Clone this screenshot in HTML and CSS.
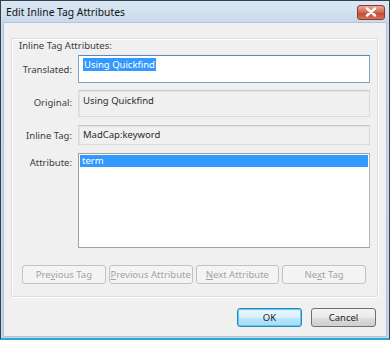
FILE: index.html
```html
<!DOCTYPE html>
<html>
<head>
  <meta charset="UTF-8">
  <title>Edit Inline Tag Attributes</title>
  <link rel="stylesheet" href="styles.css">
</head>
<body>
  <div class="window">
    <div class="titlebar">
      <span class="title">Edit Inline Tag Attributes</span>
      <span class="close">
        <svg width="12" height="10" viewBox="0 0 12 10">
          <path d="M2 1.5 L10 8.5 M10 1.5 L2 8.5" stroke="#fff" stroke-width="2.4" stroke-linecap="round"/>
        </svg>
      </span>
    </div>
    <div class="client">
      <div class="group">
        <div class="group-label">Inline Tag Attributes:</div>
        <div class="row row-translated">
          <label class="row-label">Translated:</label>
          <div class="field field-edit"><span class="selected-text">Using Quickfind</span></div>
        </div>
        <div class="row row-original">
          <label class="row-label">Original:</label>
          <div class="field field-readonly tall">Using Quickfind</div>
        </div>
        <div class="row row-tag">
          <label class="row-label">Inline Tag:</label>
          <div class="field field-readonly">MadCap:keyword</div>
        </div>
        <div class="row row-attr">
          <label class="row-label">Attribute:</label>
          <div class="field listbox">
            <div class="list-item selected">term</div>
          </div>
        </div>
        <div class="nav-buttons">
          <button class="btn" disabled>Pre<u>v</u>ious Tag</button>
          <button class="btn" disabled><u>P</u>revious Attribute</button>
          <button class="btn" disabled><u>N</u>ext Attribute</button>
          <button class="btn" disabled>Ne<u>x</u>t Tag</button>
        </div>
      </div>
      <div class="dialog-buttons">
        <button class="btn btn-default">OK</button>
        <button class="btn btn-cancel">Cancel</button>
      </div>
    </div>
  </div>
</body>
</html>
```

FILE: styles.css
```css
:root {
  --face: #f0f0f0;
  --text: #1e1e1e;
  --label: #3b3b3b;
  --disabled: #a3a3a3;
  --highlight: #3399ff;
  --font: "Noto Sans", "Open Sans", sans-serif;
}

body {
  margin: 0;
  font-family: var(--font);
  font-size: 9.5px;
  color: var(--text);
  background: #fff;
}

.window {
  width: 390px;
  height: 340px;
  box-sizing: border-box;
  border: 1px solid #34404c;
  border-bottom: 2px solid #2aa9d3;
  background: linear-gradient(#dce8f5, #c8d9eb 22px, #c2d5e9);
  display: flex;
  flex-direction: column;
}

.titlebar {
  height: 21px;
  display: flex;
  align-items: center;
  justify-content: space-between;
  padding: 0 4px 0 5px;
}

.title {
  font-size: 10.3px;
  color: #111;
}

.close {
  width: 28px;
  height: 15px;
  margin-top: 1px;
  box-sizing: border-box;
  border: 1px solid #8a3a30;
  border-radius: 3px;
  background: linear-gradient(#e9a796, #d2654f 50%, #c2432c 51%, #d7735a);
  display: flex;
  align-items: center;
  justify-content: center;
}

.client {
  flex: 1;
  margin: 0 2px 1px 2px;
  background: var(--face);
  border: 1px solid #b4c4d6;
  padding: 15px 8px 0 7px;
  display: flex;
  flex-direction: column;
}

.group {
  height: 259px;
  box-sizing: border-box;
  border: 1px solid #dcdcdc;
  box-shadow: inset 1px 1px 0 #fff, 1px 1px 0 #fff;
  border-radius: 2px;
  padding: 1px 7px 0 7px;
  display: flex;
  flex-direction: column;
}

.group-label {
  color: var(--label);
  height: 12px;
  line-height: 12px;
}

.row {
  display: flex;
  align-items: center;
}

.row-label {
  width: 53px;
  flex: none;
  text-align: right;
  margin-right: 6px;
  color: var(--label);
}

.row-translated { margin-top: 3px; }
.row-original { margin-top: 7px; }
.row-original .row-label { margin-top: -3px; }
.row-tag { margin-top: 8px; }
.row-attr { margin-top: 8px; align-items: flex-start; }
.row-attr .row-label { margin-top: 3px; }

.field {
  flex: 1;
  box-sizing: border-box;
}

.field-edit {
  height: 28px;
  background: #fff;
  border: 1px solid #7aa4cf;
  border-top-color: #5d87b8;
  padding: 3px 4px;
  line-height: 11px;
}

.selected-text {
  background: var(--highlight);
  color: #fff;
  padding: 0 1px;
}

.field-readonly {
  height: 20px;
  border: 1px solid #dadada;
  border-top-color: #c8c8c8;
  box-shadow: inset 1px 1px 0 #e3e3e3;
  padding: 2px 4px;
  line-height: 14px;
  color: #2b2b2b;
}

.field-readonly.tall {
  height: 27px;
  padding-top: 3px;
}

.listbox {
  height: 95px;
  background: #fff;
  border: 1px solid #a0a0a0;
  border-right-color: #b8b8b8;
  padding: 1px;
}

.list-item {
  height: 12px;
  line-height: 12px;
  padding: 0 2px;
}

.list-item.selected {
  background: var(--highlight);
  color: #fff;
}

.nav-buttons {
  display: flex;
  gap: 3px;
  margin: 17px 4px 0 3px;
}

.nav-buttons .btn {
  flex: 1;
  min-width: 0;
}

.btn {
  height: 19px;
  box-sizing: border-box;
  font-family: var(--font);
  font-size: 9.5px;
  white-space: nowrap;
  color: var(--text);
  border: 1px solid #707070;
  border-radius: 3px;
  background: linear-gradient(#f2f2f2, #ebebeb 50%, #dddddd 51%, #cfcfcf);
  padding: 0;
}

.btn:disabled {
  color: var(--disabled);
  border-color: #c2c2c2;
  background: #f4f4f4;
}

.dialog-buttons {
  display: flex;
  justify-content: flex-end;
  gap: 9px;
  margin-top: 11px;
  padding-right: 2px;
}

.dialog-buttons .btn {
  width: 65px;
  height: 19px;
}

.btn-default {
  border-color: #3c7fb1;
  background: linear-gradient(#eaf6fd, #d9f0fc 50%, #bee6fd 51%, #a7d9f5);
  box-shadow: inset 0 0 0 1px #48d4f6;
}

.btn-cancel {
  width: 66px;
}
```
